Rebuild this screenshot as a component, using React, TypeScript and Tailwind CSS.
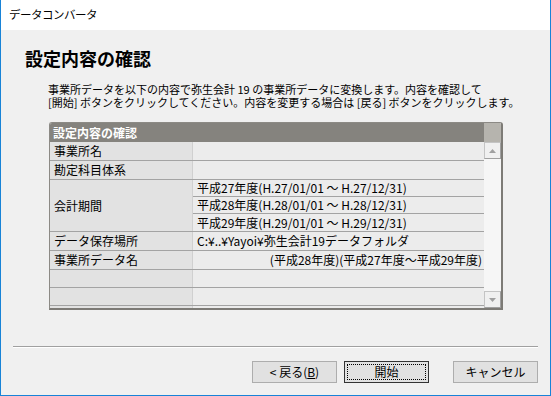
import React from 'react';

const font = { fontFamily: '"Noto Sans CJK JP", "Liberation Sans", sans-serif' };

type Row = { label: string; values: string[]; right?: boolean };

const rows: Row[] = [
  { label: '事業所名', values: [''] },
  { label: '勘定科目体系', values: [''] },
  {
    label: '会計期間',
    values: [
      '平成27年度(H.27/01/01 〜 H.27/12/31)',
      '平成28年度(H.28/01/01 〜 H.28/12/31)',
      '平成29年度(H.29/01/01 〜 H.29/12/31)',
    ],
  },
  { label: 'データ保存場所', values: ['C:¥..¥Yayoi¥弥生会計19データフォルダ'] },
  { label: '事業所データ名', values: ['(平成28年度)(平成27年度〜平成29年度)'], right: true },
  { label: '', values: [''] },
  { label: '', values: [''] },
  { label: '', values: [''] },
];

function Arrow({ up }: { up?: boolean }) {
  return (
    <svg width="7" height="4" viewBox="0 0 7 4">
      <path d={up ? 'M0 4 L3.5 0 L7 4 Z' : 'M0 0 L3.5 4 L7 0 Z'} fill="#a0a0a0" />
    </svg>
  );
}

function Button({ children, primary }: { children: React.ReactNode; primary?: boolean }) {
  return (
    <button
      className={
        primary
          ? 'w-[85px] h-[22px] bg-[#e1e1e1] border border-[#333333] p-[2px] text-[12px] leading-none text-black'
          : 'w-[85px] h-[22px] bg-[#e1e1e1] border border-[#adadad] text-[12px] leading-none text-black'
      }
    >
      {primary ? (
        <span className="flex w-full h-full items-center justify-center border border-dotted border-black">
          {children}
        </span>
      ) : (
        children
      )}
    </button>
  );
}

export default function App() {
  return (
    <div
      className="w-[551px] h-[396px] flex flex-col bg-[#f0f0f0] border-x border-b border-[#1883d7] overflow-hidden text-black"
      style={font}
    >
      <div className="h-[30px] shrink-0 bg-white flex items-center pl-[8px] text-[11.5px] tracking-[-0.5px]">
        データコンバータ
      </div>

      <h1 className="mt-[16px] pl-[24px] text-[18px] leading-[24px] font-bold">設定内容の確認</h1>

      <p className="mt-[13px] pl-[47px] text-[11px] leading-[13px]">
        事業所データを以下の内容で弥生会計 19 の事業所データに変換します。内容を確認して
        <br />
        [開始] ボタンをクリックしてください。内容を変更する場合は [戻る] ボタンをクリックします。
      </p>

      <div className="mt-[13px] ml-[48px] w-[454px] h-[188px] shrink-0 flex rounded-t-[3px] border-l border-t border-[#8c8a85] border-r-2 border-b-2 border-r-[#7d7b76] border-b-[#7d7b76] overflow-hidden">
        <div className="w-[435px] flex flex-col bg-[#ececec]">
          <div className="h-[19px] shrink-0 bg-[#85837e] text-white font-bold text-[12px] leading-[19px] pl-[3px]">
            設定内容の確認
          </div>
          <div className="flex flex-col">
            {rows.map((row, i) => (
              <div key={i} className="flex border-b border-[#a3a3a3]">
                <div className="w-[143px] shrink-0 bg-[#e2e2e2] border-r border-[#d0d0d0] flex items-center pl-[4px] text-[12px]">
                  {row.label}
                </div>
                <div className="flex-1 flex flex-col">
                  {row.values.map((v, j) => (
                    <div
                      key={j}
                      className={
                        (j < row.values.length - 1 ? 'border-b border-[#a3a3a3] ' : '') +
                        (row.right ? 'justify-end pr-[2px] ' : 'pl-[4px] ') +
                        'h-[17px] flex items-center text-[12px] whitespace-nowrap'
                      }
                    >
                      {v}
                    </div>
                  ))}
                </div>
              </div>
            ))}
          </div>
        </div>
        <div className="w-[17px] flex flex-col">
          <div className="h-[19px] shrink-0 bg-[#b6b4ae]" />
          <div className="h-[17px] shrink-0 bg-[#f0f0f0] border border-[#c4c4c4] border-r-[#a0a0a0] border-b-[#a0a0a0] flex items-center justify-center">
            <Arrow up />
          </div>
          <div className="flex-1 bg-[#f6f6f6]" />
          <div className="h-[17px] shrink-0 bg-[#f0f0f0] border border-[#c4c4c4] border-r-[#a0a0a0] border-b-[#a0a0a0] flex items-center justify-center">
            <Arrow />
          </div>
        </div>
      </div>

      <div className="mt-[36px] ml-[12px] mr-[12px] border-t border-[#a0a0a0] border-b border-b-white" />

      <div className="mt-[13px] flex justify-end pr-[12px]">
        <Button>
          <span>
            &lt; 戻る(<span className="underline">B</span>)
          </span>
        </Button>
        <div className="w-[7px]" />
        <Button primary>開始</Button>
        <div className="w-[24px]" />
        <Button>キャンセル</Button>
      </div>
    </div>
  );
}
